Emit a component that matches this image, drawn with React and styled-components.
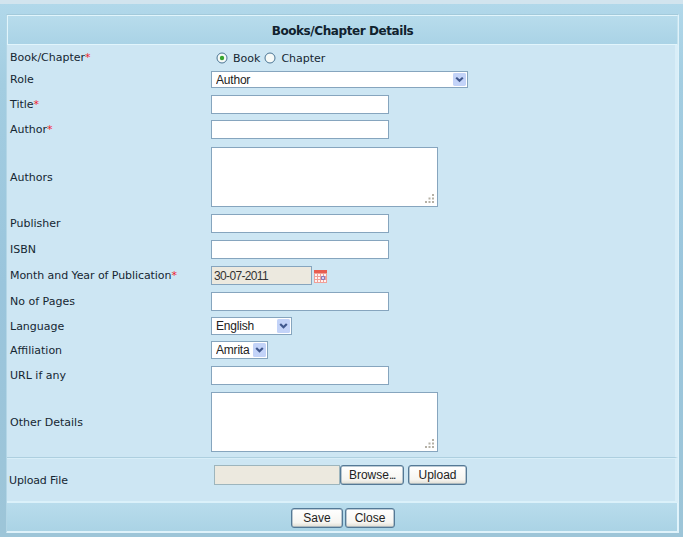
import React from 'react';
import styled, { createGlobalStyle } from 'styled-components';

const Global = createGlobalStyle`
  * { box-sizing: border-box; }
  body {
    margin: 0;
    font: 11px/15px Verdana, "DejaVu Sans", sans-serif;
    color: #152632;
    overflow: hidden;
  }
`;

const Page = styled.div`
  height: 537px;
  padding: 10px 4px 0 6px;
  border-top: 4px solid #d2e4ee;
  background: linear-gradient(to bottom, #b1d8ea 0, #a3cde1 80px, #9ac5dc 280px, #9dc5d8 100%);
`;

const Panel = styled.form`
  height: 519px;
  display: flex;
  flex-direction: column;
  background: #cde6f3;
  border: 1px solid #dff2fa;
  border-top-color: #a3cadb;
  border-left-color: #b3d6e6;
`;

const Header = styled.h1`
  height: 30px;
  margin: 0;
  border: 1px solid #e1f5fc;
  border-right-color: #c5e3ef;
  background: linear-gradient(#b8dcec, #aad3e6);
  font-size: 12px;
  line-height: 30px;
  text-align: center;
  letter-spacing: -0.42px;
  color: #10222e;
`;

const Fields = styled.div`
  height: 412px;
  border-right: 3px solid #d9eef8;
`;

const Row = styled.div`
  display: grid;
  grid-template-columns: 201px 1fr;
  align-items: center;
  height: ${(p) => p.$height || 19}px;
  margin-top: ${(p) => p.$gap ?? 7}px;
  padding-left: 3px;
`;

const Label = styled.label`
  white-space: nowrap;
  letter-spacing: ${(p) => p.$spacing || 0}px;
`;

const RadioLabel = styled(Label)`
  padding-top: 2px;
`;

const Star = styled.span`
  color: #f0222c;
`;

const Control = styled.div`
  display: flex;
  align-items: center;
`;

const TextInput = styled.input`
  width: ${(p) => p.$width || 178}px;
  height: 19px;
  margin: 0;
  padding: 1px 2px 0;
  border: 1px solid #86a5be;
  border-radius: 0;
  outline: 0;
  background: ${(p) => (p.readOnly ? '#ece9df' : '#fff')};
  color: #333;
  font: 12px "Liberation Sans", Arial, sans-serif;
  letter-spacing: -0.65px;
`;

const AreaBox = styled.div`
  position: relative;
  width: 227px;
  height: 60px;
`;

const Area = styled.textarea`
  display: block;
  width: 100%;
  height: 100%;
  border: 1px solid #86a5be;
  background: #fff;
  resize: none;
  outline: 0;
`;

const Grip = styled.svg`
  position: absolute;
  right: 3px;
  bottom: 3px;
`;

const SelectBox = styled.div`
  position: relative;
  width: ${(p) => p.$width}px;
  height: ${(p) => p.$height}px;
`;

const NativeSelect = styled.select`
  appearance: none;
  display: block;
  width: 100%;
  height: 100%;
  margin: 0;
  padding: 0 17px 0 4px;
  border: 1px solid #86a5be;
  border-radius: 0;
  background: #fff;
  color: #222;
  font: 12px "Liberation Sans", Arial, sans-serif;
  letter-spacing: -0.2px;
`;

const Arrow = styled.svg`
  position: absolute;
  right: 2px;
  top: 2px;
  pointer-events: none;
`;

const Radio = styled.svg`
  margin: 0 5px 0 ${(p) => p.$left}px;
`;

const Calendar = styled.svg`
  margin: 2px 0 0 2px;
`;

const Upload = styled.div`
  display: grid;
  grid-template-columns: 205px 1fr;
  height: 46px;
  padding: 7px 0 0 2px;
  border-top: 1px solid #adcfdf;
  border-bottom: 2px solid #dbf1fa;
  border-right: 3px solid #d9eef8;
  box-shadow: inset 0 1px #d8eef8;
`;

const UploadLabel = styled.div`
  padding-top: 8px;
  letter-spacing: -0.15px;
`;

const UploadControls = styled.div`
  display: flex;
  align-items: flex-start;
`;

const FilePath = styled(TextInput)`
  width: 126px;
  height: 20px;
  border-color: #9db5bd;
`;

const Button = styled.button`
  width: ${(p) => p.$width}px;
  height: 20px;
  margin: 0 0 0 ${(p) => p.$left || 0}px;
  padding: 0;
  border: 1px solid #547996;
  border-radius: 3px;
  background: linear-gradient(#fff, #f6f5f1 75%, #dfdcd1);
  box-shadow: inset 0 0 0 0.5px #7894a8;
  color: #222;
  font: 12px/18px "Liberation Sans", Arial, sans-serif;
`;

const Dots = styled.span`
  letter-spacing: -1.3px;
`;

const Footer = styled.div`
  flex: 1;
  display: flex;
  padding: 5px 0 0 284px;
  border-right: 1px solid #e0f4fc;
  border-bottom: 1px solid #dff2fa;
  background: linear-gradient(#b8dcec, #aad3e5);
`;

function Field({ label, required, spacing, height, gap, children }) {
  return (
    <Row $height={height} $gap={gap}>
      <Label $spacing={spacing}>{label}{required && <Star>*</Star>}</Label>
      <Control>{children}</Control>
    </Row>
  );
}

function Select({ width, height = 18, value }) {
  return (
    <SelectBox $width={width} $height={height}>
      <NativeSelect defaultValue={value}><option>{value}</option></NativeSelect>
      <Arrow width="13" height={height - 4} viewBox="0 0 13 14" preserveAspectRatio="none">
        <rect width="13" height="14" rx="1.5" fill="#c3d3f8" />
        <path d="M3.2 5 6.5 8.3 9.8 5" fill="none" stroke="#41588d" strokeWidth="2.2" />
      </Arrow>
    </SelectBox>
  );
}

function TextArea() {
  return (
    <AreaBox>
      <Area />
      <Grip width="10" height="10" fill="#b5b1a6">
        <path d="M7 0h2v2h-2zM3.5 3.5h2v2h-2zM7 3.5h2v2h-2zM0 7h2v2h-2zM3.5 7h2v2h-2zM7 7h2v2h-2z" />
      </Grip>
    </AreaBox>
  );
}

function RadioDot({ checked, left }) {
  return (
    <Radio $left={left} width="12" height="12" viewBox="0 0 12 12">
      <circle cx="6" cy="6" r="5" fill="#f6faf8" stroke="#4b7594" />
      {checked && <circle cx="6" cy="6" r="2.2" fill="#37a52f" />}
    </Radio>
  );
}

export default function App() {
  return (
    <>
      <Global />
      <Page>
        <Panel>
          <Header>Books/Chapter Details</Header>
          <Fields>
            <Field label="Book/Chapter" required gap={4} height={14}>
              <RadioDot checked left={5} />
              <RadioLabel>Book</RadioLabel>
              <RadioDot left={4} />
              <RadioLabel>Chapter</RadioLabel>
            </Field>
            <Field label="Role" gap={8} height={17}><Select width={257} height={17} value="Author" /></Field>
            <Field label="Title" required><TextInput /></Field>
            <Field label="Author" required gap={6}><TextInput /></Field>
            <Field label="Authors" gap={8} height={60}><TextArea /></Field>
            <Field label="Publisher"><TextInput /></Field>
            <Field label="ISBN"><TextInput /></Field>
            <Field label="Month and Year of Publication" required spacing={-0.07}>
              <TextInput $width={101} readOnly value="30-07-2011" />
              <Calendar width="13" height="13" viewBox="0 0 13 13">
                <rect width="13" height="13" fill="#f0a098" />
                <rect width="13" height="3" fill="#e85d50" />
                <path d="M1 4h2v2H1zM4 4h2v2H4zM7 4h2v2H7zM10 4h2v2h-2zM1 7h2v2H1zM4 7h2v2H4zM1 10h2v2H1zM4 10h2v2H4zM7 10h2v2H7zM10 10h2v2h-2z" fill="#fff2f2" />
                <path d="M7.5 6.5h3v3h-3z" fill="#d8d2f4" stroke="#8779bd" />
              </Calendar>
            </Field>
            <Field label="No of Pages"><TextInput /></Field>
            <Field label="Language" gap={6} height={18}><Select width={81} value="English" /></Field>
            <Field label="Affiliation" gap={6} height={18}><Select width={57} value="Amrita" /></Field>
            <Field label="URL if any"><TextInput /></Field>
            <Field label="Other Details" height={60}><TextArea /></Field>
          </Fields>
          <Upload>
            <UploadLabel>Upload File</UploadLabel>
            <UploadControls>
              <FilePath readOnly value="" />
              <Button type="button" $width={64}>Browse<Dots>...</Dots></Button>
              <Button type="button" $width={59} $left={4}>Upload</Button>
            </UploadControls>
          </Upload>
          <Footer>
            <Button type="button" $width={52}>Save</Button>
            <Button type="button" $width={50} $left={2}>Close</Button>
          </Footer>
        </Panel>
      </Page>
    </>
  );
}
